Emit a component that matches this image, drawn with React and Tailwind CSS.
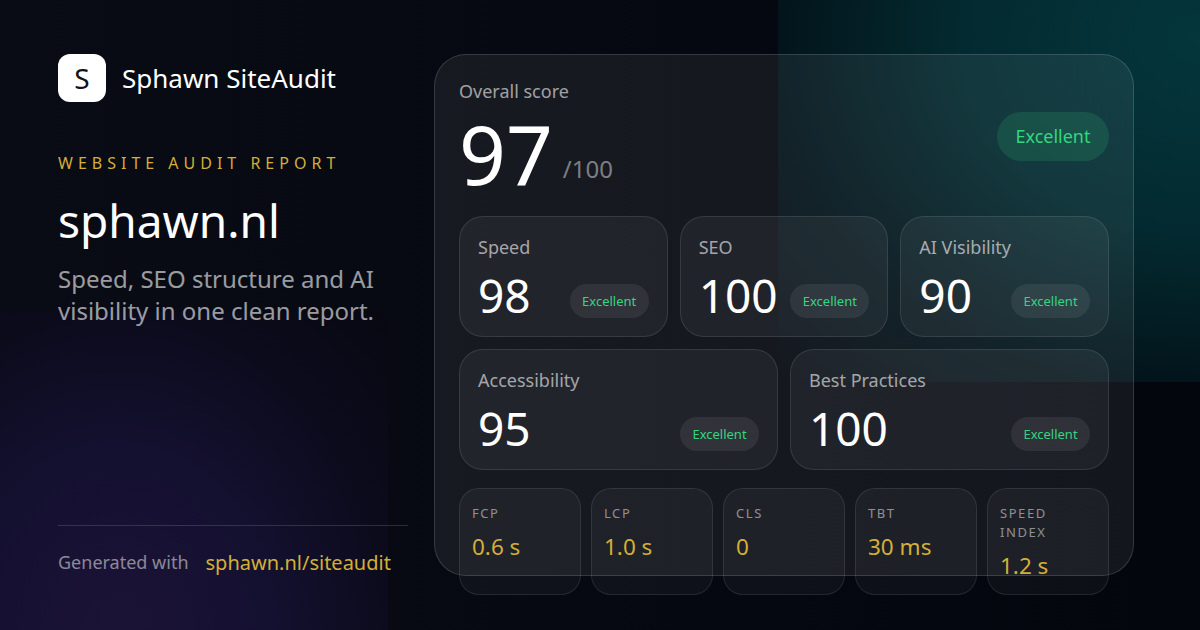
const scores = [
  { label: "Speed", value: 98 },
  { label: "SEO", value: 100 },
  { label: "AI Visibility", value: 90 },
];

const wideScores = [
  { label: "Accessibility", value: 95 },
  { label: "Best Practices", value: 100 },
];

const metrics = [
  { label: "FCP", value: "0.6 s" },
  { label: "LCP", value: "1.0 s" },
  { label: "CLS", value: "0" },
  { label: "TBT", value: "30 ms" },
  { label: "Speed Index", value: "1.2 s" },
];

const ScoreTile = ({ label, value }) => (
  <div className="h-[121px] rounded-[24px] border border-white/10 bg-white/[0.05] px-[18px] pt-[18px]">
    <div className="text-[18px] leading-[25px] text-white/60">{label}</div>
    <div className="mt-[12px] flex items-end justify-between">
      <div className="text-[46px] leading-[46px] text-white">{value}</div>
      <div className="flex h-[34px] min-w-[79px] items-center justify-center rounded-full bg-white/[0.07] pt-[1px] text-[13px] text-[#34d680]">
        Excellent
      </div>
    </div>
  </div>
);

const MetricTile = ({ label, value }) => (
  <div className="rounded-[20px] border border-white/[0.09] bg-white/[0.04] px-[12px] pt-[15px] pb-[13px]">
    <div className="text-[13px] leading-[19px] tracking-[0.12em] text-white/50 uppercase">{label}</div>
    <div className="mt-[9px] text-[22.5px] leading-[30px] text-[#d4af37]">{value}</div>
  </div>
);

export default function App() {
  return (
    <div className="relative isolate flex h-[630px] w-[1200px] overflow-hidden bg-linear-to-r from-[#0a0c15] to-[#04060e] font-['Noto_Sans',sans-serif]">
      <div className="absolute top-0 right-0 -z-10 h-[382px] w-[422px] bg-[radial-gradient(ellipse_at_100%_10%,#04363c_0%,#032a30_40%,#03141b_71%,#05070f_100%)]" />
      <div className="absolute bottom-0 left-0 -z-10 h-[318px] w-[388px] bg-[radial-gradient(ellipse_at_30%_100%,#1b1336_0%,#141030_40%,#0c0b1c_71%,#080812_100%)]" />

      <div className="mt-[54px] ml-[58px] flex h-[522px] w-[350px] shrink-0 flex-col">
        <div className="flex items-center gap-[16px]">
          <div className="flex h-[48px] w-[48px] items-center justify-center rounded-[12px] bg-white text-[28px] text-[#111318]">
            S
          </div>
          <div className="text-[26px] text-white">Sphawn SiteAudit</div>
        </div>
        <div className="mt-[51px] text-[16px] leading-[20px] tracking-[5px] text-[#d4af37]">
          WEBSITE AUDIT REPORT
        </div>
        <div className="mt-[17px] text-[46px] leading-[60px] text-white">sphawn.nl</div>
        <div className="mt-[13px] text-[24px] leading-[32px] text-white/60">
          Speed, SEO structure and AI visibility in one clean report.
        </div>
        <div className="mt-auto mb-[1px] flex items-center gap-[17px] border-t border-white/[0.14] pt-[24px] leading-[25px]">
          <span className="text-[18px] text-white/50">Generated with</span>
          <span className="text-[20px] text-[#d4af37]">sphawn.nl/siteaudit</span>
        </div>
      </div>

      <div className="mt-[54px] ml-[26px] h-[522px] w-[700px] shrink-0 rounded-[32px] border border-white/[0.14] bg-white/[0.065] px-[24px] pt-[24px]">
        <div className="flex items-start justify-between">
          <div>
            <div className="text-[18px] leading-[25px] text-white/60">Overall score</div>
            <div className="mt-[7px] flex items-end gap-[10px]">
              <span className="text-[82px] leading-[84px] text-white">97</span>
              <span className="mb-[10px] text-[24px] leading-[33px] text-white/45">/100</span>
            </div>
          </div>
          <div className="mt-[33px] rounded-full bg-[#34d680]/15 px-[18.5px] py-[12px] text-[18px] leading-[25px] text-[#34d680]">
            Excellent
          </div>
        </div>

        <div className="mt-[21px] grid grid-cols-3 gap-[12px]">
          {scores.map((s) => (
            <ScoreTile key={s.label} {...s} />
          ))}
        </div>
        <div className="mt-[12px] grid grid-cols-2 gap-[12px]">
          {wideScores.map((s) => (
            <ScoreTile key={s.label} {...s} />
          ))}
        </div>

        <div className="mt-[18px] grid grid-cols-5 gap-[10px]">
          {metrics.map((m) => (
            <MetricTile key={m.label} {...m} />
          ))}
        </div>
      </div>
    </div>
  );
}
